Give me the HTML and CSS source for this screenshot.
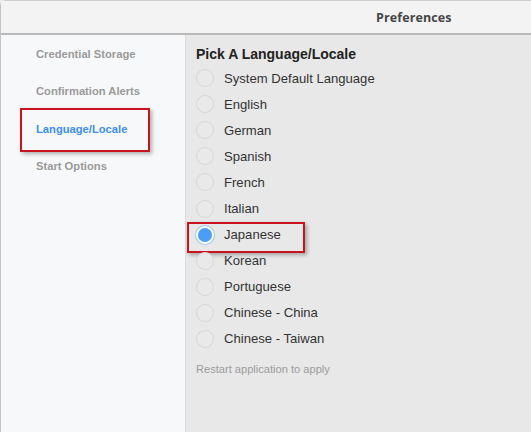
FILE: index.html
```html
<!DOCTYPE html>
<html>
<head>
<meta charset="utf-8">
<link rel="stylesheet" href="styles.css">
</head>
<body>
<div class="window">
  <header class="titlebar"><span class="title">Preferences</span></header>
  <div class="content">
    <nav class="sidebar">
      <div class="nav-item">Credential Storage</div>
      <div class="nav-item">Confirmation Alerts</div>
      <div class="nav-item active">Language/Locale</div>
      <div class="nav-item">Start Options</div>
    </nav>
    <main class="main">
      <h2 class="heading">Pick A Language/Locale</h2>
      <div class="options">
        <label class="option"><span class="radio"></span>System Default Language</label>
        <label class="option"><span class="radio"></span>English</label>
        <label class="option"><span class="radio"></span>German</label>
        <label class="option"><span class="radio"></span>Spanish</label>
        <label class="option"><span class="radio"></span>French</label>
        <label class="option"><span class="radio"></span>Italian</label>
        <label class="option selected"><span class="highlight"></span><span class="radio checked"></span>Japanese</label>
        <label class="option"><span class="radio"></span>Korean</label>
        <label class="option"><span class="radio"></span>Portuguese</label>
        <label class="option"><span class="radio"></span>Chinese - China</label>
        <label class="option"><span class="radio"></span>Chinese - Taiwan</label>
      </div>
      <p class="hint">Restart application to apply</p>
    </main>
  </div>
</div>
</body>
</html>
```
FILE: styles.css
```css
* { box-sizing: border-box; }
html, body { margin: 0; padding: 0; }
body {
  width: 531px;
  height: 432px;
  overflow: hidden;
  background: #e8e8e8;
  font-family: "Liberation Sans", Arial, sans-serif;
}
.window {
  display: flex;
  flex-direction: column;
  height: 432px;
  border-left: 1px solid #c4c4c4;
  border-top: 1px solid #cfcfcf;
  border-top-left-radius: 6px;
}
.titlebar {
  height: 34px;
  flex: none;
  background: #f3f3f3;
  border-bottom: 2px solid #b9b9b9;
  display: flex;
  align-items: center;
  padding-left: 375px;
}
.title {
  font-family: "Open Sans", sans-serif;
  font-weight: 700;
  font-size: 12.5px;
  color: #464646;
  letter-spacing: 0.1px;
}
.content {
  flex: 1;
  display: flex;
}
.sidebar {
  width: 185px;
  flex: none;
  background: #f7f8f9;
  border-right: 1px solid #dcdcdc;
  display: flex;
  flex-direction: column;
}
.nav-item {
  height: 37.5px;
  display: flex;
  align-items: center;
  padding-left: 35px;
  font-size: 11.2px;
  font-weight: 700;
  color: #9a9a9a;
  position: relative;
}
.nav-item.active { color: #3d8ff0; }
.nav-item.active::before {
  content: "";
  position: absolute;
  left: 19px;
  top: -2px;
  width: 126px;
  height: 40px;
  border: 2px solid #c8141e;
  box-shadow: 2px 2px 4px rgba(0,0,0,0.3);
}
.main {
  flex: 1;
  background: #e8e8e8;
  padding: 11px 0 0 10px;
}
.heading {
  margin: 0;
  font-size: 14px;
  font-weight: 700;
  color: #222;
  height: 17px;
  line-height: 17px;
}
.options {
  display: flex;
  flex-direction: column;
  margin-top: 2px;
}
.option {
  position: relative;
  height: 26.1px;
  display: flex;
  align-items: center;
  font-size: 13.1px;
  color: #333;
}
.radio {
  width: 18px;
  height: 18px;
  border-radius: 50%;
  border: 1px solid #d6d6d6;
  background: #e9e9e9;
  margin-right: 10px;
  flex: none;
}
.radio.checked {
  background: #4b9ef6;
  border: 2px solid #fff;
  box-shadow: 0 0 0 1px #9cc8f5;
}
.highlight {
  position: absolute;
  left: -9px;
  top: 0;
  width: 118px;
  height: 31px;
  border: 2px solid #c8141e;
  box-shadow: 2px 2px 4px rgba(0,0,0,0.3);
}
.hint {
  margin: 11px 0 0 0;
  font-size: 11.1px;
  color: #9b9b9b;
}
```
